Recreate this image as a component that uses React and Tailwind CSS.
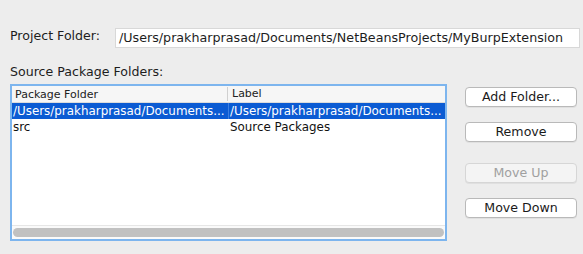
import React from 'react';

const font = { fontFamily: '"DejaVu Sans", "Liberation Sans", sans-serif' };

function MacButton({ children, disabled, className = '' }) {
  return (
    <button
      disabled={disabled}
      className={`block h-[20px] w-[112px] rounded-[4px] border text-[12.6px] leading-none shadow-[0_1px_0_rgba(0,0,0,0.05)] ${
        disabled ? 'border-[#d6d6d6] bg-[#f4f4f4] text-[#a0a0a0]' : 'border-[#b9b9b9] bg-white text-[#1a1a1a]'
      } ${className}`}
    >
      {children}
    </button>
  );
}

export default function App() {
  const rows = [
    { folder: '/Users/prakharprasad/Documents...', label: '/Users/prakharprasad/Documents...', selected: true },
    { folder: 'src', label: 'Source Packages', selected: false },
  ];

  return (
    <div className="w-[583px] h-[254px] bg-[#ededed] text-[#1d1d1d] overflow-hidden" style={font}>
      <div className="flex items-center pt-[28px] pl-[10px]">
        <span className="w-[105px] text-[12.6px] leading-[20px] -mt-[4px]">Project Folder:</span>
        <div className="h-[20px] w-[465px] bg-white border border-[#d8d8d8] pl-[3px] text-[12.7px] leading-[18px] whitespace-nowrap overflow-hidden">
          /Users/prakharprasad/Documents/NetBeansProjects/MyBurpExtension
        </div>
      </div>

      <div className="pl-[10px] mt-[16px] text-[12.6px] leading-[16px]">Source Package Folders:</div>

      <div className="flex mt-[4px] pl-[10px]">
        <div className="w-[437px] h-[157px] border-2 border-[#7db5ee] bg-white flex flex-col">
          <div className="flex h-[17px] bg-[#f6f6f6] border-b border-[#dcdcdc] text-[11px] leading-[16px] text-[#222]">
            <div className="w-[216px] pl-[3px] border-r border-[#d0d0d0] my-[1px]">Package Folder</div>
            <div className="pl-[4px]">Label</div>
          </div>
          {rows.map((r) => (
            <div
              key={r.folder}
              className={`flex h-[16px] text-[11.9px] leading-[16px] whitespace-nowrap ${
                r.selected ? 'bg-[#0b5bd3] text-white' : 'text-[#111]'
              }`}
            >
              <div className="w-[216px] pl-[1px] overflow-hidden">{r.folder}</div>
              <div className={`pl-[1px] overflow-hidden ${r.selected ? 'border-l border-[#3d7fe0]' : 'border-l border-transparent'}`}>
                {r.label}
              </div>
            </div>
          ))}
          <div className="flex-1" />
          <div className="h-[14px] border-t border-[#e6e6e6] bg-[#fafafa] flex items-center px-[1px]">
            <div className="h-[9px] w-full rounded-full bg-[#c1c1c1]" />
          </div>
        </div>

        <div className="flex flex-col ml-[18px] pt-[3px]">
          <MacButton>Add Folder...</MacButton>
          <MacButton className="mt-[15px]">Remove</MacButton>
          <MacButton disabled className="mt-[21px]">Move Up</MacButton>
          <MacButton className="mt-[15px]">Move Down</MacButton>
        </div>
      </div>
    </div>
  );
}
